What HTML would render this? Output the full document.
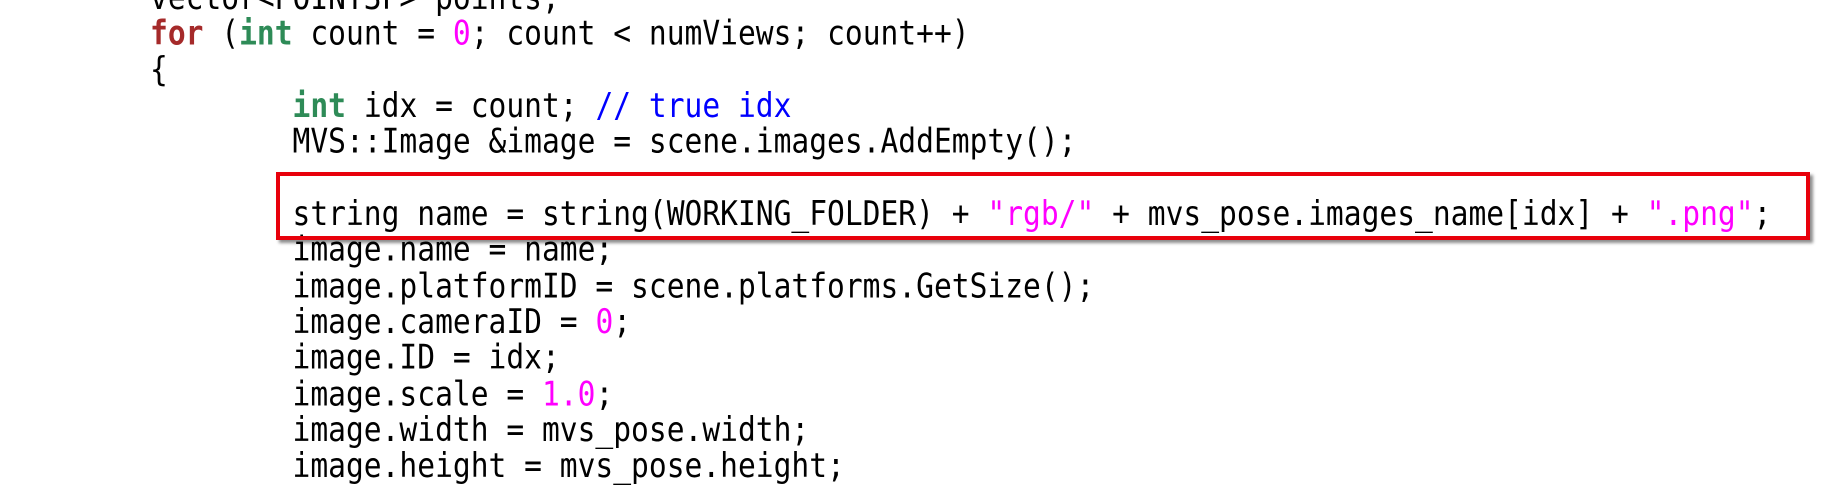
<!DOCTYPE html>
<html><head><style>
html,body{margin:0;padding:0;background:#fff;width:1824px;height:492px;overflow:hidden;position:relative}
pre{position:absolute;left:150px;top:-20px;margin:0;font-family:"DejaVu Sans Mono","Liberation Mono",monospace;font-size:29.6px;line-height:31.35px;color:#000;transform-origin:0 0;transform:scaleY(1.15)}
.k{color:#a52a2a;font-weight:bold}.t{color:#2e8b57;font-weight:bold}.n{color:#f0f}.c{color:#00f}
.box{position:absolute;left:276px;top:172px;width:1526px;height:60px;border:4px solid #e8000b;box-shadow:3px 3px 3px rgba(0,0,0,.45)}
</style></head><body>
<pre>vector&lt;POINT3F&gt; points;
<span class="k">for</span> (<span class="t">int</span> count = <span class="n">0</span>; count &lt; numViews; count++)
{
        <span class="t">int</span> idx = count; <span class="c">// true idx</span>
        MVS::Image &amp;image = scene.images.AddEmpty();

        string name = string(WORKING_FOLDER) + <span class="n">"rgb/"</span> + mvs_pose.images_name[idx] + <span class="n">".png"</span>;
        image.name = name;
        image.platformID = scene.platforms.GetSize();
        image.cameraID = <span class="n">0</span>;
        image.ID = idx;
        image.scale = <span class="n">1.0</span>;
        image.width = mvs_pose.width;
        image.height = mvs_pose.height;
</pre>
<div class="box"></div>
</body></html>
